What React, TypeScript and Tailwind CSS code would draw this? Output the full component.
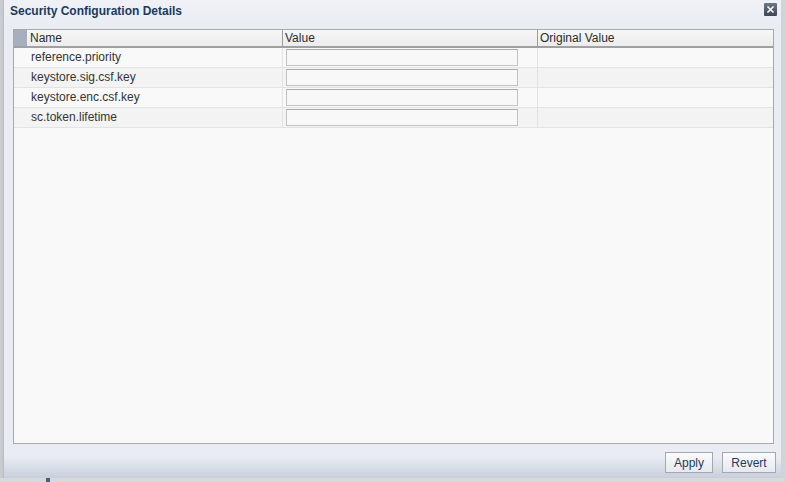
import React from "react";

const rows = ["reference.priority", "keystore.sig.csf.key", "keystore.enc.csf.key", "sc.token.lifetime"];

export default function App() {
  return (
    <div
      className="w-[785px] h-[482px] bg-[#d3d6db] flex flex-col overflow-hidden"
      style={{ fontFamily: '"Liberation Sans", Arial, sans-serif' }}
    >
      <div className="flex h-[478px]">
        <div className="w-[3px] bg-[#c9ccd1]" />
        <div className="w-[778px] h-full flex flex-col border-l border-[#b9bec8] bg-[linear-gradient(to_bottom,#eff1f6_0%,#e9ecf3_6%,#e9ecf3_95.5%,#c8cfdb_100%)] shadow-[1px_1px_2px_rgba(0,0,0,0.35)]">
          <div className="h-[29px] flex items-start justify-between pl-[6px] pr-[4px] pt-[4px]">
            <span className="text-[12px] font-bold text-[#1b3a5e] leading-[14px]">Security Configuration Details</span>
            <div className="w-[13px] h-[13px] mt-[-1px] bg-gradient-to-b from-[#6e7784] to-[#3f4753] rounded-[1px] flex items-center justify-center">
              <svg width="9" height="9" viewBox="0 0 9 9">
                <path d="M1.5 1.5 L7.5 7.5 M7.5 1.5 L1.5 7.5" stroke="white" strokeWidth="1.6" />
              </svg>
            </div>
          </div>
          <div className="flex flex-col pl-[9px] pr-[7px]">
            <div className="h-[415px] border border-[#a9a9a9] bg-[#f9f9f9] flex flex-col">
              <div className="flex h-[18px] border-b-2 border-[#a0a0a0] bg-gradient-to-b from-[#f7f7f7] to-[#ececec] text-[12px] text-[#2b2b2b] leading-[17px]">
                <div className="w-[13px] bg-[#a7afbe]" />
                <div className="w-[256px] pl-[3px] border-r border-[#9c9c9c]">Name</div>
                <div className="w-[255px] pl-[2px] border-r border-[#9c9c9c]">Value</div>
                <div className="flex-1 pl-[2px]">Original Value</div>
              </div>
              {rows.map((r, i) => (
                <div
                  key={r}
                  className={`flex h-[20px] border-b border-[#e3e3e3] text-[12px] text-[#333] ${i % 2 === 1 ? "bg-[#f3f3f3]" : "bg-[#f9f9f9]"}`}
                >
                  <div className="w-[13px]" />
                  <div className="w-[256px] pl-[4px] border-r border-[#e3e3e3] leading-[19px]">{r}</div>
                  <div className="w-[255px] pl-[3px] pt-[1px] border-r border-[#e3e3e3]">
                    <div className="w-[232px] h-[17px] border border-[#c2c2c2] border-t-[#a9a9a9] bg-[#f8f8f8]" />
                  </div>
                  <div className="flex-1" />
                </div>
              ))}
            </div>
            <div className="flex justify-end gap-[9px] mt-[8px] mr-[-2px]">
              <button className="w-[48px] h-[21px] border border-[#a2a9b3] bg-gradient-to-b from-[#fbfbfc] to-[#e7e9ee] text-[12px] text-[#1d3a5c] leading-[18px]">
                Apply
              </button>
              <button className="w-[54px] h-[21px] border border-[#a2a9b3] bg-gradient-to-b from-[#fbfbfc] to-[#e7e9ee] text-[12px] text-[#1d3a5c] leading-[18px]">
                Revert
              </button>
            </div>
          </div>
        </div>
        <div className="flex-1 bg-[#d0d3d8]" />
      </div>
      <div className="flex-1 flex bg-[#d7d9dd]">
        <div className="w-[46px]" />
        <div className="w-[4px] bg-[#3c6488]" />
      </div>
    </div>
  );
}
